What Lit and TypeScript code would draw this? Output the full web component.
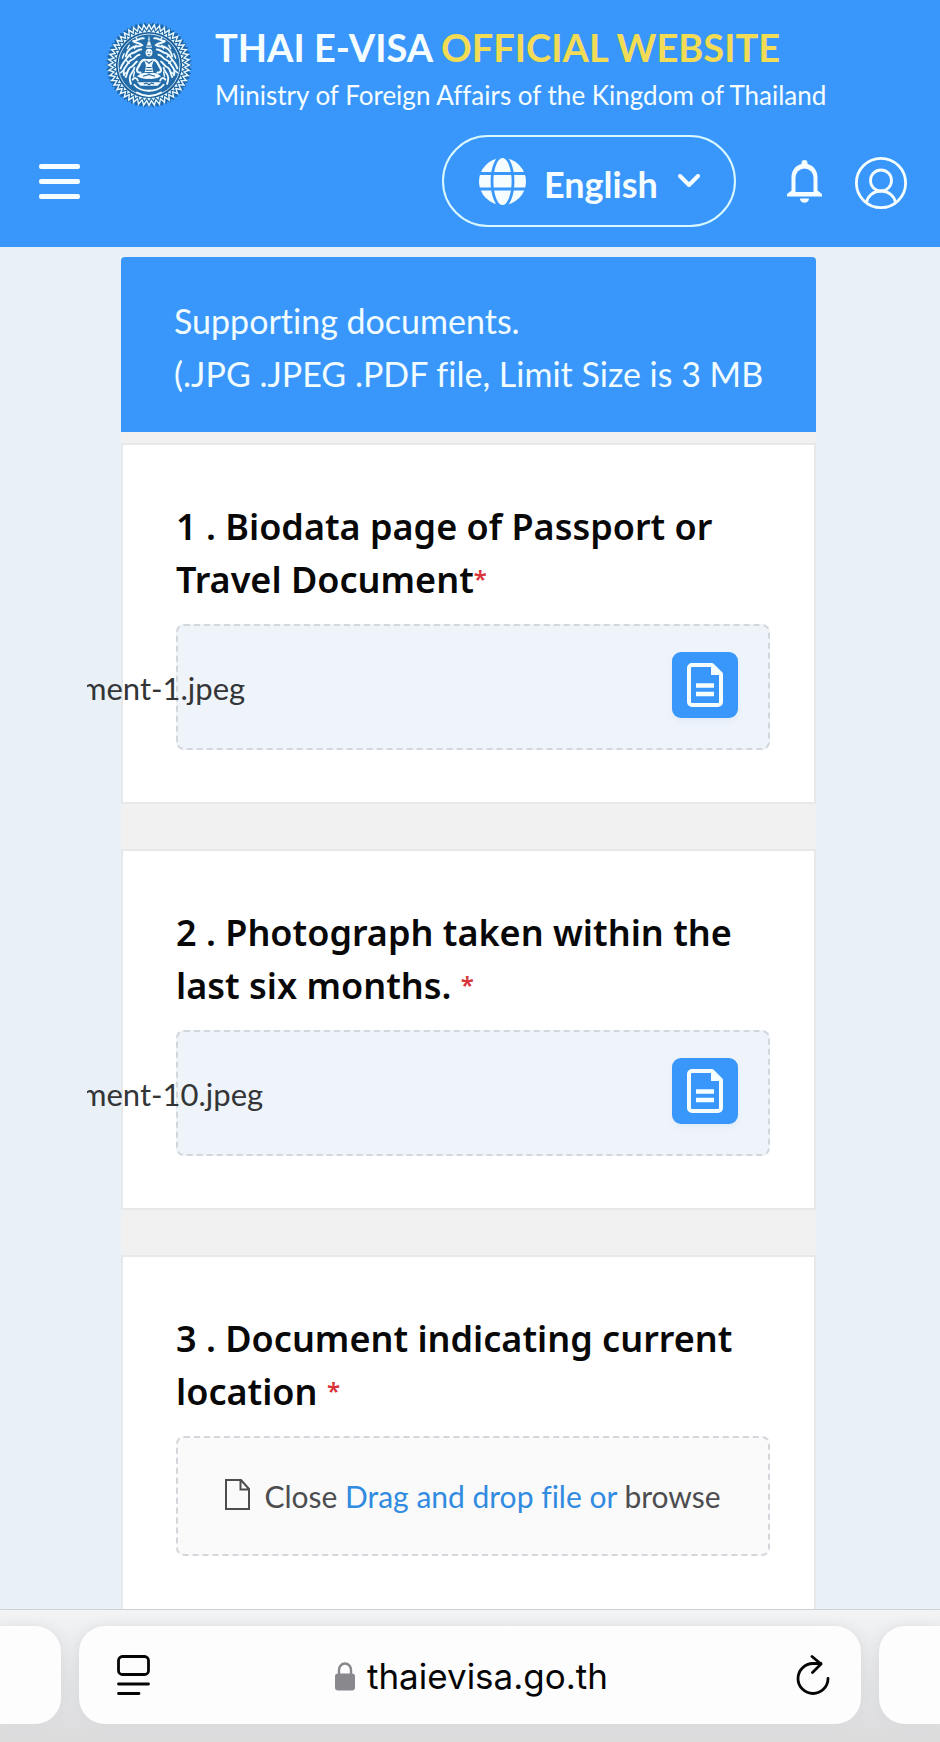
import { LitElement, html, svg, css } from "lit";
import { customElement, property } from "lit/decorators.js";

const ring = (count: number, inner: number, outer: number) =>
  Array.from({ length: count * 2 }, (_, i) => {
    const r = i % 2 ? inner : outer;
    const a = (Math.PI * i) / count;
    return `${(50 + r * Math.cos(a)).toFixed(2)},${(50 + r * Math.sin(a)).toFixed(2)}`;
  }).join(" ");

@customElement("ministry-seal")
class MinistrySeal extends LitElement {
  static styles = css`
    :host { display: block; flex: none; width: 86px; height: 86px; }
    svg { display: block; width: 100%; height: 100%; }
  `;

  private half() {
    return svg`
      <g stroke-width="2.2">
        <path d="M44 19C39 18 36 23 31 22C35 25 39 24 42 27C38 30 34 27 30 30C26 32 24 36 23 40"/>
        <path d="M41 32C37 31 35 36 31 36C27 37 25 41 22 45C20 48 18 50 17 54"/>
        <path d="M39 38C35 38 34 43 30 44C26 45 25 50 22 53C20 56 20 59 21 62"/>
        <path d="M36 46C33 48 32 52 28 53C25 55 25 60 23 64M33 53C33 57 29 59 28 63C27 66 28 69 29 72"/>
      </g>
      <g stroke-width="1.7">
        <path d="M27 27L25 31M21 37L19 42M35 27L33 31M27 38L29 41M24 45L27 48M20 56L17 59M25 58L22 60M33 58L32 63M36 20L35 18"/>
      </g>
      <path stroke-width="2.6" d="M45 44C40 44 40 49 37 53C35 56 36 59 40 59"/>
      <path stroke-width="2.2" d="M31 67C33 64 36 65 37 68M33 73C37 78 43 80 50 80M36 82C41 85 45 86 50 86"/>
    `;
  }

  render() {
    return html`
      <svg viewBox="0 0 100 100" aria-label="Ministry emblem" role="img">
        <polygon points=${ring(60, 47, 50)} fill="#1d66a8" />
        <polygon points=${ring(48, 43, 49)} fill="#e9f8ff" />
        <polygon points=${ring(48, 40, 45)} fill="#1b639f" />
        <polygon points=${ring(48, 38, 42)} fill="#e4f6ff" />
        <circle cx="50" cy="50" r="38.500" fill="#175c96" />
        <circle cx="50" cy="50" r="36" fill="#236ca8" stroke="#e4f6ff" stroke-width="1" />
        <g fill="none" stroke="#f1fbff" stroke-linecap="round">
          ${this.half()}
          <g transform="translate(100 0) scale(-1 1)">${this.half()}</g>
        </g>
        <g fill="#f1fbff">
          <path d="M50 15L51.500 24L53.500 30H46.500L48.500 24Z" />
          <ellipse cx="50" cy="35.500" rx="4" ry="4.500" />
          <path d="M44 43H56L53.500 51L55 58H45L46.500 51Z" />
          <path d="M36 63Q43 57 50 60Q57 57 64 63Q58 67 50 66Q42 67 36 63Z" />
          <path d="M36 70H64L60 74H40Z" />
        </g>
        <g fill="none" stroke="#175c96" stroke-width="1.200">
          <path d="M47.500 35H49M51 35H52.500M48.500 38H51.500M46 45L50 48L54 45M47 53H53M46 56H54M43 63L50 61L57 63M49 22H51M47.500 28H52.500M44 72L47 71L50 73L53 71L56 72" />
        </g>
      </svg>
    `;
  }
}

@customElement("site-header")
class SiteHeader extends LitElement {
  static styles = css`
    :host { display: block; background: #3997fb; color: #f5fdff; }
    .brand { display: flex; gap: 23px; padding: 22px 40px 0 106px; }
    .words { display: flex; flex-direction: column; white-space: nowrap; }
    .title { margin: 0; font-size: 38px; line-height: 50px; font-weight: 700; }
    .gold { color: #f3dc55; }
    .sub { margin: 0; font-size: 26px; line-height: 46px; }
    .bar { display: flex; align-items: center; padding: 17px 33px 20px 39px; }
    button { border: 0; padding: 0; background: none; color: inherit; display: block; }
    svg { display: block; }
    .menu { margin-right: auto; }
    .lang {
      display: flex; align-items: center; box-sizing: border-box; width: 294px; height: 92px;
      border: 2px solid #d9f8ff; border-radius: 46px; padding: 0 34px 0 35px; margin-right: 51px;
    }
    .lang select {
      appearance: none; border: 0; background: none; color: inherit; padding: 0; margin: 6px 0 0 18px;
      font: 700 36px/44px Lato, "Noto Sans", sans-serif; flex: 1; min-width: 0;
    }
    .user { margin: 4px 0 0 33px; }
  `;

  render() {
    return html`
      <header>
        <div class="brand">
          <ministry-seal></ministry-seal>
          <div class="words">
            <h1 class="title">THAI E-VISA <span class="gold">OFFICIAL WEBSITE</span></h1>
            <p class="sub">Ministry of Foreign Affairs of the Kingdom of Thailand</p>
          </div>
        </div>
        <div class="bar">
          <button class="menu" aria-label="Menu">
            <svg width="41" height="35" viewBox="0 0 41 35" fill="currentColor">
              <rect width="41" height="5" rx="2" /><rect y="15" width="41" height="5" rx="2" /><rect y="30" width="41" height="5" rx="2" />
            </svg>
          </button>
          <label class="lang">
            <svg width="47" height="47" viewBox="0 0 47 47">
              <circle cx="23.5" cy="23.5" r="23.5" fill="#f5fdff" />
              <g fill="none" stroke="#3997fb" stroke-width="2.8">
                <ellipse cx="23.5" cy="23.5" rx="10.500" ry="25" />
                <path d="M0 15.5H47M0 31H47" />
              </g>
            </svg>
            <select aria-label="Language"><option>English</option></select>
            <svg width="22" height="14" viewBox="0 0 22 14" fill="none" stroke="currentColor" stroke-width="4" stroke-linecap="round" stroke-linejoin="round"><path d="M2 2L11 11L20 2" /></svg>
          </label>
          <button aria-label="Notifications">
            <svg width="35" height="43" viewBox="0 0 35 43" fill="#f5fdff">
              <path d="M14.5 4V3a3 3 0 0 1 6 0v1c6 1.500 10 6.500 10 13v13.500L35 34v2.500H0V34l4.500-3.500V17c0-6.500 4-11.500 10-13Z" />
              <path d="M8.500 32V17.500a9 9 0 0 1 18 0V32Z" fill="#3997fb" />
              <path d="M13 38.500h9a4.500 4.300 0 0 1-9 0Z" />
            </svg>
          </button>
          <button class="user" aria-label="Account">
            <svg width="52" height="52" viewBox="0 0 52 52" fill="none" stroke="currentColor" stroke-width="2.800">
              <circle cx="26" cy="26" r="24.600" /><circle cx="26" cy="23.500" r="10.500" />
              <path d="M11.500 45.500C12.500 39 18.500 34 26 34S39.500 39 40.500 45.500" />
            </svg>
          </button>
        </div>
      </header>
    `;
  }
}

@customElement("document-card")
class DocumentCard extends LitElement {
  @property() heading = "";
  @property() file = "";
  @property({ type: Boolean }) spaced = false;

  static styles = css`
    :host { display: block; background: #fff; padding: 55px 44px 52px 53px; box-shadow: 0 0 0 2px #e6e8ea; }
    .heading { margin: 0 0 18px; font-family: "Noto Sans", sans-serif; font-size: 36px; line-height: 53px; font-weight: 600; color: #080808; }
    .star { color: #d8343a; font-size: 24px; line-height: 24px; vertical-align: 5px; }
    .box { position: relative; box-sizing: border-box; border: 2px dashed #d3d7dc; border-radius: 8px; display: flex; align-items: center; }
    .filled { height: 126px; background: #eff4fb; justify-content: flex-end; padding-right: 30px; }
    .empty { height: 120px; background: #fafafa; justify-content: center; font-size: 30px; color: #4d4d4f; white-space: nowrap; }
    .name { position: absolute; left: -91px; top: 39px; overflow: hidden; white-space: nowrap; font-size: 31px; line-height: 46px; color: #333537; }
    .name span { display: block; margin-left: -6px; }
    .open { display: grid; place-items: center; width: 66px; height: 66px; margin-bottom: 4px; border: 0; border-radius: 9px; padding: 0; background: #3997fb; box-shadow: 0 3px 6px #dfebf6; }
    .blue { color: #318be0; }
    .pick { display: flex; align-items: center; gap: 14px; }
    .pick svg { flex: none; margin-bottom: 4px; }
    .pick input { position: absolute; opacity: 0; width: 1px; height: 1px; }
  `;

  render() {
    return html`
      <h2 class="heading">${this.heading}${this.spaced ? " " : ""}<span class="star">*</span></h2>
      ${this.file
        ? html`<div class="box filled">
            <div class="name"><span>${this.file}</span></div>
            <button class="open" aria-label="View file">
              <svg width="36" height="44" viewBox="0 0 36 44">
                <path d="M4 2H25L34 11V39a3 3 0 0 1-3 3H5a3 3 0 0 1-3-3V5a3 3 0 0 1 3-3Z" fill="none" stroke="#f5fdff" stroke-width="4" stroke-linejoin="round" />
                <path d="M24 2V12H34Z" fill="#f5fdff" />
                <path d="M9 22.500H27M9 31H27" stroke="#f5fdff" stroke-width="4.500" />
              </svg>
            </button>
          </div>`
        : html`<div class="box empty">
            <label class="pick">
              <input type="file" accept=".jpg,.jpeg,.pdf" />
              <svg width="25" height="31" viewBox="0 0 25 31" fill="none" stroke="#4d4d4f" stroke-width="2"><path d="M1 1H16L24 10V30H1ZM15.500 1V10.500H24" /></svg>
              <span>Close <span class="blue">Drag and drop file or</span> browse</span>
            </label>
          </div>`}
    `;
  }
}

@customElement("browser-bar")
class BrowserBar extends LitElement {
  static styles = css`
    :host { display: block; flex: none; border-top: 1px solid #cdd3d5; background: linear-gradient(#f3f4f5, #e3e4e6 55%, #dcdcdd); }
    .row { display: grid; grid-template-columns: 61px 1fr 61px; gap: 18px; padding: 16px 0 18px; }
    .pill { height: 98px; box-sizing: border-box; background: #fdfdfe; border-radius: 26px; box-shadow: 0 2px 14px #d8d9db; }
    .first { border-radius: 0 26px 26px 0; }
    .last { border-radius: 26px 0 0 26px; }
    .main { display: flex; align-items: center; justify-content: space-between; padding: 0 31px 0 38px; }
    button { border: 0; background: none; padding: 0; color: #050505; }
    svg { display: block; }
    .address { display: flex; align-items: center; gap: 12px; margin: 2px 4px 0 0; font: 400 35px/44px Inter, sans-serif; }
  `;

  render() {
    return html`
      <footer class="row">
        <div class="pill first"></div>
        <div class="pill main">
          <button aria-label="Page menu">
            <svg width="34" height="40" viewBox="0 0 34 40" fill="none" stroke="currentColor" stroke-width="2.800" stroke-linecap="round"><rect x="1.500" y="1.500" width="30" height="18" rx="4" /><path d="M1.500 29H31.500M1.500 38.500H22" /></svg>
          </button>
          <button class="address">
            <svg width="20" height="29" viewBox="0 0 20 29"><rect y="11.500" width="20" height="17" rx="3" fill="#88888d" /><path d="M4 13V8a6 6.500 0 0 1 12 0v5" fill="none" stroke="#88888d" stroke-width="2.400" /></svg>
            <span>thaievisa.go.th</span>
          </button>
          <button aria-label="Reload">
            <svg width="34" height="40" viewBox="0 0 34 40" fill="none" stroke="currentColor" stroke-width="2.800" stroke-linecap="round" stroke-linejoin="round"><path d="M32 23.500A15 15 0 1 1 17 8.500H25M16 1.500L25 9L16.500 17.500" /></svg>
          </button>
        </div>
        <div class="pill last"></div>
      </footer>
    `;
  }
}

@customElement("app-root")
class AppRoot extends LitElement {
  static styles = css`
    :host { display: flex; flex-direction: column; height: 100vh; overflow: hidden; background: #e9f1f7; font-family: Lato, "Noto Sans", sans-serif; font-variant-ligatures: none; }
    .page { flex: 1; min-height: 0; overflow: hidden; padding: 10px 124px 0 121px; }
    .banner { background: #3997fb; color: #f0fcff; border-radius: 4px 4px 0 0; padding: 37px 52px 32px 53px; font-size: 34px; line-height: 53px; }
    .banner p { margin: 0; overflow: hidden; white-space: nowrap; }
    .list { display: flex; flex-direction: column; gap: 49px; background: #f1f1f1; padding: 13px 2px 49px; }
    document-card:last-child { padding-bottom: 56px; }
  `;

  render() {
    return html`
      <site-header></site-header>
      <main class="page">
        <div class="banner">
          <p>Supporting documents.</p>
          <p>(.JPG .JPEG .PDF file, Limit Size is 3 MB)</p>
        </div>
        <div class="list">
          <document-card heading="1 . Biodata page of Passport or Travel Document" file="ment-1.jpeg"></document-card>
          <document-card heading="2 . Photograph taken within the last six months." spaced file="ment-10.jpeg"></document-card>
          <document-card heading="3 . Document indicating current location" spaced></document-card>
        </div>
      </main>
      <browser-bar></browser-bar>
    `;
  }
}
